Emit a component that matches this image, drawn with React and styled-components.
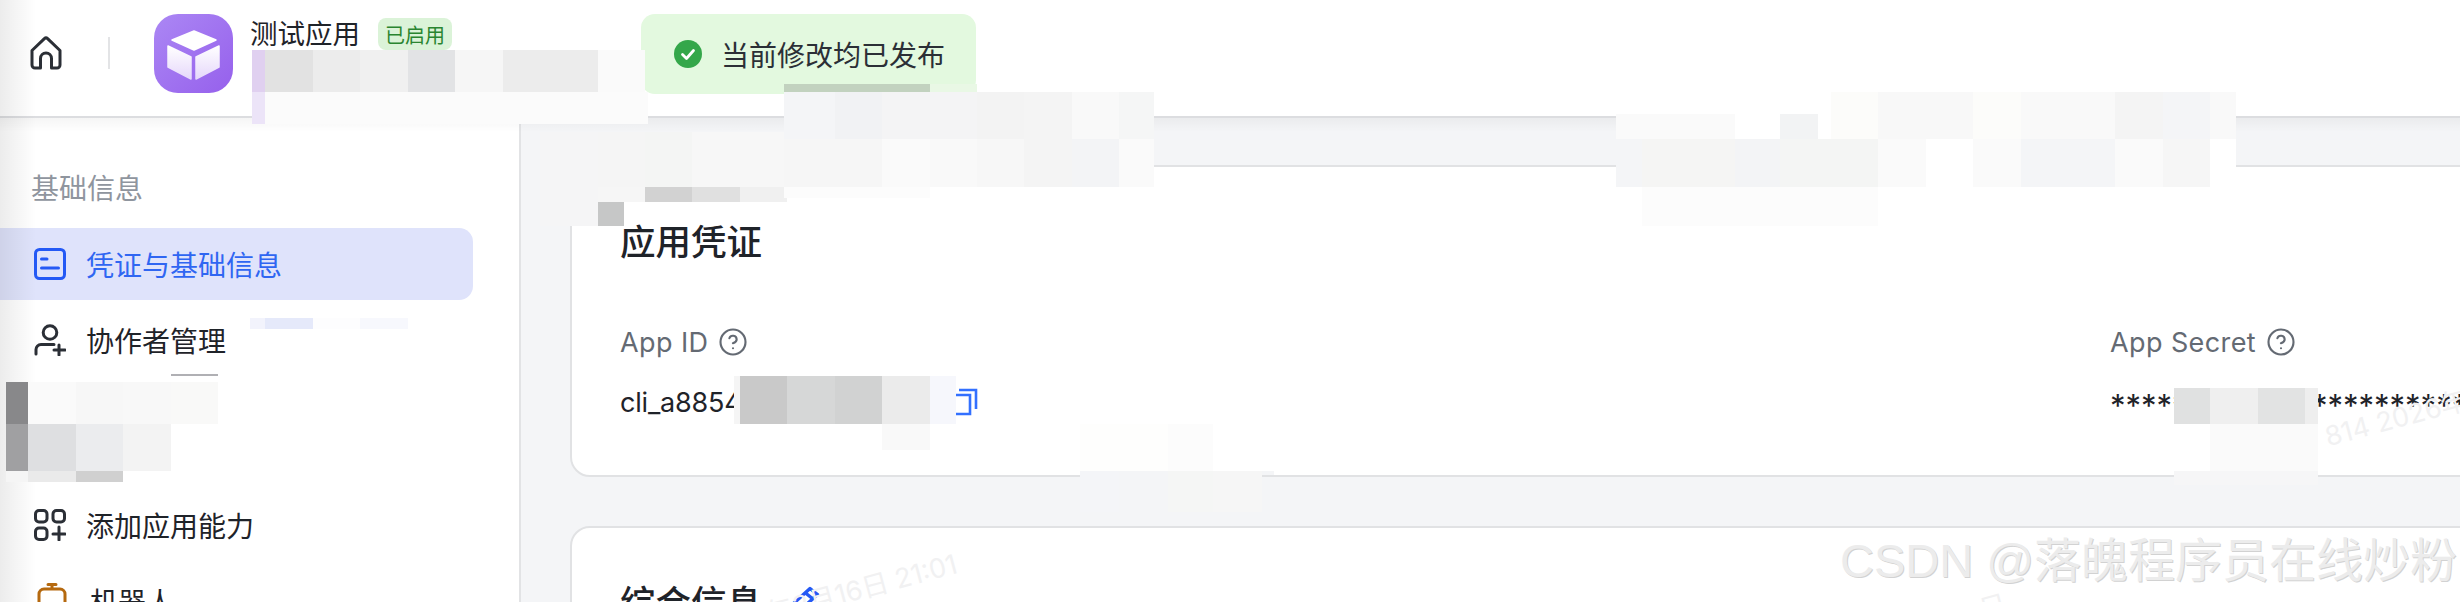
import React from 'react'
import styled, { createGlobalStyle } from 'styled-components'
import { CircleHelp } from 'lucide-react'

const GlobalStyle = createGlobalStyle`
  html, body {
    margin: 0;
    padding: 0;
    background: #fff;
    overflow: hidden;
  }
  * { box-sizing: border-box; }
`

const Page = styled.div`
  position: relative;
  width: 2460px;
  height: 602px;
  overflow: hidden;
  display: flex;
  flex-direction: column;
  background: #fff;
  color: #1f2329;
  font-family: Inter, "Noto Sans CJK SC", sans-serif;
  font-size: 27px;

  &::before {
    content: "";
    position: absolute;
    left: 0;
    top: 0;
    width: 36px;
    height: 100%;
    background: linear-gradient(90deg, rgba(0, 0, 0, 0.075), rgba(0, 0, 0, 0));
    z-index: 3;
    pointer-events: none;
  }
`

const Header = styled.header`
  flex: none;
  height: 118px;
  display: flex;
  align-items: center;
  padding: 0 0 10px 29px;
  border-bottom: 2px solid #dcdde0;
`

const HomeButton = styled.div`
  width: 34px;
  height: 34px;
  color: #2b2f36;
  svg { display: block; }
`

const HeaderDivider = styled.div`
  width: 2px;
  height: 32px;
  margin: 0 44px 0 45px;
  background: #e3e4e6;
`

const AppLogo = styled.div`
  width: 79px;
  height: 79px;
  border-radius: 24px;
  background: linear-gradient(135deg, #ab87f4, #9660ec);
  svg { display: block; }
`

const AppInfo = styled.div`
  align-self: flex-start;
  display: flex;
  align-items: center;
  gap: 18px;
  margin: 18px 0 0 17px;
`

const AppName = styled.div`
  font-size: 27.5px;
  line-height: 32px;
`

const StatusBadge = styled.span`
  display: inline-flex;
  align-items: center;
  height: 32px;
  padding: 0 7px;
  border-radius: 8px;
  background: #dbf3d8;
  color: #2a8530;
  font-size: 20px;
`

const Toast = styled.div`
  position: absolute;
  left: 641px;
  top: 14px;
  width: 335px;
  height: 80px;
  display: flex;
  align-items: center;
  gap: 19px;
  padding-left: 33px;
  border-radius: 14px;
  background: #e3f9df;
  font-size: 28px;
  color: #2b2f36;
  z-index: 2;
  svg { flex: none; }
`

const Body = styled.div`
  position: relative;
  flex: 1;
  min-height: 0;
  display: flex;

  &::before {
    content: "";
    position: absolute;
    left: 0;
    right: 0;
    top: 0;
    height: 14px;
    background: linear-gradient(180deg, rgba(0, 0, 0, 0.04), rgba(0, 0, 0, 0));
    pointer-events: none;
  }
`

const Sidebar = styled.aside`
  flex: none;
  width: 521px;
  padding: 51px 46px 0 0;
  border-right: 2px solid #e2e3e5;
  background: #fff;
`

const SectionLabel = styled.div`
  height: 40px;
  margin-bottom: 19px;
  padding-left: 31px;
  line-height: 40px;
  font-size: 28px;
  color: #8f959e;
`

const NavList = styled.nav`
  display: flex;
  flex-direction: column;
  gap: 4px;
`

const NavItem = styled.div`
  height: 72px;
  display: flex;
  align-items: center;
  gap: 20px;
  padding-left: 34px;
  border-radius: 0 14px 14px 0;
  font-size: 28px;
  flex: none;
  background: ${({ $active }) => ($active ? '#dfe3fb' : 'transparent')};
  color: ${({ $active }) => ($active ? '#2f66f2' : '#1f2329')};
  svg { flex: none; display: block; }
`

const NavGap = styled.div`
  height: 105px;
  flex: none;
`

const Main = styled.main`
  flex: 1;
  min-width: 0;
  overflow: hidden;
  display: flex;
  flex-direction: column;
  gap: 49px;
  padding: 47px 0 0 49px;
  background: #f4f5f7;
`

const Card = styled.section`
  flex: none;
  width: 2100px;
  padding: 51px 48px 53px;
  border: 2px solid #e1e2e4;
  border-radius: 20px 0 0 20px;
  background: #fff;
`

const CardTitle = styled.h2`
  margin: 0;
  display: flex;
  align-items: flex-start;
  gap: 22px;
  font-size: 35.5px;
  line-height: 50px;
  font-weight: 500;
  color: #1f2329;
  svg { margin-top: 7px; flex: none; }
`

const FieldGrid = styled.div`
  display: grid;
  grid-template-columns: 1490px 1fr;
  margin-top: 54px;
`

const Field = styled.div`
  display: flex;
  flex-direction: column;
  gap: 20px;
  min-width: 0;
`

const FieldLabel = styled.div`
  height: 40px;
  display: flex;
  align-items: center;
  gap: 10px;
  font-size: 27px;
  letter-spacing: 0.4px;
  color: #646a73;
`

const FieldValue = styled.div`
  height: 40px;
  display: flex;
  align-items: center;
  font-size: 27px;
  letter-spacing: -0.2px;
  white-space: nowrap;
  color: #1f2329;
`

const ValueText = styled.span`
  width: 330px;
  flex: none;
`

const SecretText = styled.span`
  font-size: 31px;
  letter-spacing: 0;
  line-height: 40px;
  padding-top: 8px;
`

const CopyButton = styled.div`
  width: 28px;
  height: 28px;
  color: #3370ff;
  svg { display: block; }
`

const Patch = styled.div`
  position: absolute;
  left: ${({ $x }) => $x}px;
  top: ${({ $y }) => $y}px;
  width: ${({ $w }) => $w}px;
  height: ${({ $h }) => $h}px;
  background: ${({ $c }) => $c};
  z-index: 4;
`

const Stamp = styled.div`
  position: absolute;
  left: ${({ $x }) => $x}px;
  top: ${({ $y }) => $y}px;
  font-size: 27px;
  white-space: nowrap;
  color: #f1f1f2;
  transform: rotate(-15deg);
  transform-origin: right center;
  z-index: 5;
`

const Watermark = styled.div`
  position: absolute;
  left: 1840px;
  top: 526px;
  font-family: "Liberation Sans", "Noto Sans CJK SC", sans-serif;
  font-size: 47px;
  line-height: 70px;
  white-space: nowrap;
  color: #ececec;
  text-shadow: 1px 1px 0 #d2d2d2;
  z-index: 6;
`

// one row of mosaic cells: xs holds the cell edges, colors one colour per cell
const row = (y, h, xs, colors) =>
  colors.map((c, i) => ({ x: xs[i], y, w: xs[i + 1] - xs[i], h, c }))

const patches = [
  // header, under the app name
  ...row(50, 42, [252, 265, 313, 360, 408, 455, 503, 598, 645],
    ['#e0d0f0', '#e2e2e2', '#ececec', '#f0f0f0', '#e2e3e5', '#f6f6f6', '#ececec', '#fafafa']),
  ...row(92, 32, [252, 265, 648], ['#ece4f8', '#fbfbfb']),
  // next to the toast
  ...row(132, 94, [540, 598], ['#f5f5f6']),
  ...row(132, 55, [598, 645, 692, 784], ['#f5f5f5', '#f4f5f4', '#f7f7f7']),
  ...row(187, 15, [598, 645, 692, 740, 787], ['#f6f6f6', '#d2d2d2', '#e0e0e0', '#f0f0f0']),
  ...row(202, 24, [598, 624], ['#c6c7c7']),
  ...row(84, 8, [784, 930, 977], ['#c2d2bf', '#e9f8e5']),
  ...row(92, 47, [784, 835, 882, 930, 977, 1024, 1072, 1119, 1154],
    ['#f4f5f7', '#f1f2f4', '#f4f4f5', '#f4f4f5', '#f3f3f3', '#f4f4f4', '#f9f9f9', '#f5f6f6']),
  ...row(139, 48, [784, 835, 882, 930, 977, 1024, 1072, 1119, 1154],
    ['#f6f6f6', '#f6f6f6', '#fafafa', '#f9f9f9', '#f7f7f7', '#f4f4f4', '#f3f4f6', '#fafafa']),
  ...row(187, 11, [784, 930], ['#fcfcfc']),
  // right of the header line
  ...row(92, 47, [1831, 1878, 1973, 2021, 2115, 2163, 2210, 2236],
    ['#fcfcfa', '#f8f8f8', '#fcfcfa', '#f9f9f9', '#f4f4f4', '#f4f5f7', '#f9f9f9']),
  ...row(114, 25, [1616, 1735, 1780, 1818, 1831], ['#fafafa', '#ffffff', '#f2f3f4', '#ffffff']),
  ...row(139, 48, [1616, 1642, 1735, 1780, 1878, 1926, 1973, 2021, 2115, 2163, 2210, 2236],
    ['#f4f5f7', '#f5f5f4', '#f3f4f6', '#f4f5f4', '#fafafa', '#ffffff', '#fafafa', '#f4f5f7', '#fafafa', '#f6f6f6', '#ffffff']),
  ...row(187, 39, [1642, 1878], ['#fcfcfc']),
  // sidebar
  ...row(318, 11, [250, 265, 313, 360, 408], ['#f2f3fc', '#e5e9fa', '#fdfdfe', '#f7f8fd']),
  ...row(374, 2, [171, 218], ['#b0b0b4']),
  ...row(382, 42, [6, 28, 76, 123, 171, 218], ['#88888a', '#fafafa', '#f7f7f7', '#f8f8f8', '#f9f9f8']),
  ...row(424, 47, [6, 28, 76, 123, 171], ['#a0a0a2', '#dedfe1', '#ebecee', '#f3f3f3']),
  ...row(471, 11, [6, 28, 76, 123], ['#f5f5f5', '#eaeaea', '#d0d0d0']),
  // App ID value
  ...row(376, 48, [734, 740, 787, 835, 882, 930, 956],
    ['#f5f5f5', '#c9c9c9', '#d6d7d7', '#d1d2d2', '#ebebeb', '#f6f7fc']),
  ...row(424, 26, [882, 930], ['#f9f9f9']),
  // App Secret value
  ...row(388, 36, [2174, 2210, 2258, 2305, 2318], ['#e0e1e1', '#efefef', '#e2e3e3', '#eeeeee']),
  ...row(424, 47, [2210, 2318], ['#fafafa']),
  ...row(471, 14, [2174, 2318], ['#f6f6f7']),
  // over the bottom edge of the first card
  ...row(424, 47, [1080, 1168, 1213], ['#fefefd', '#fcfcfc']),
  ...row(471, 41, [1080, 1119, 1168, 1213, 1262], ['#f4f5f8', '#f4f5f7', '#f5f6f5', '#f6f6f6']),
  ...row(471, 4, [1262, 1274], ['#f4f5f7']),
]

const HomeIcon = () => (
  <svg width="34" height="34" viewBox="0 0 34 34" fill="none" stroke="currentColor" strokeWidth="3" strokeLinejoin="round">
    <path d="M3 14.5 15.4 2.6a2.3 2.3 0 0 1 3.2 0L31 14.5V29a3 3 0 0 1-3 3h-5.5V22.5a5.5 5.5 0 0 0-11 0V32H6a3 3 0 0 1-3-3Z" />
  </svg>
)

const CubeIcon = () => (
  <svg width="79" height="79" viewBox="0 0 79 79">
    <defs>
      <linearGradient id="cubeFace" x1="0" y1="0" x2="0" y2="1">
        <stop offset="0" stopColor="#ffffff" />
        <stop offset="1" stopColor="#e6d8fb" />
      </linearGradient>
    </defs>
    <g fill="url(#cubeFace)" stroke="url(#cubeFace)" strokeWidth="1.5" strokeLinejoin="round">
      <path d="M40 17 62 26 40 36 18 26Z" fill="#fff" stroke="#fff" />
      <path d="M14 32 37 43V65L14 53Z" />
      <path d="M65 32 42 43V65L65 53Z" />
    </g>
  </svg>
)

const CheckIcon = () => (
  <svg width="28" height="28" viewBox="0 0 28 28">
    <circle cx="14" cy="14" r="14" fill="#34a74a" />
    <path d="M8.5 14.5 12.5 18.5 19.5 10.5" fill="none" stroke="#fff" strokeWidth="2.8" strokeLinecap="round" strokeLinejoin="round" />
  </svg>
)

const CredentialIcon = () => (
  <svg width="32" height="32" viewBox="0 0 32 32" fill="none" stroke="#2459f5" strokeWidth="3" strokeLinecap="round">
    <rect x="1.5" y="1.5" width="29" height="29" rx="4" />
    <path d="M7.5 11H13M7.5 20H24.5" />
  </svg>
)

const PersonAddIcon = () => (
  <svg width="32" height="32" viewBox="0 0 32 32" fill="none" stroke="#2b2f36" strokeWidth="3" strokeLinecap="round">
    <circle cx="16" cy="8.5" r="6.8" />
    <path d="M2 30V25.5a5 5 0 0 1 5-5H20" />
    <path d="M25 21V31M20 26H31" />
  </svg>
)

const AddAppIcon = () => (
  <svg width="32" height="32" viewBox="0 0 32 32" fill="none" stroke="#2b2f36" strokeWidth="3" strokeLinecap="round">
    <rect x="1.5" y="1.5" width="11.5" height="11.5" rx="3.5" />
    <rect x="19" y="1.5" width="11.5" height="11.5" rx="3.5" />
    <rect x="1.5" y="19" width="11.5" height="11.5" rx="3.5" />
    <path d="M25 18V31M19 25H31" />
  </svg>
)

const RobotIcon = () => (
  <svg width="36" height="36" viewBox="0 0 36 36" fill="none" stroke="#b5690f" strokeWidth="3" strokeLinecap="round">
    <path d="M18 1V5M14 1.5H22" />
    <rect x="5" y="6" width="26" height="26" rx="5" />
    <path d="M1 22H3M33 22H35" />
  </svg>
)

const CopyIcon = () => (
  <svg width="28" height="28" viewBox="0 0 28 28" fill="none" stroke="currentColor" strokeWidth="2.6">
    <path d="M9 2H26V21" />
    <path d="M3 7H20V26H6a3 3 0 0 1-3-3Z" />
  </svg>
)

const PenIcon = () => (
  <svg width="36" height="34" viewBox="0 0 36 34" fill="none" stroke="#2459f5" strokeWidth="3.4" strokeLinejoin="round">
    <path d="M26 2.5 33.5 8.5 11 29 2 32 4 22.5Z" />
    <path d="M21.5 7 29 13" />
  </svg>
)

const HelpIcon = () => <CircleHelp size={30} strokeWidth={1.7} color="#646a73" />

const App = () => {
  return (
    <Page>
      <GlobalStyle />
      <Header>
        <HomeButton><HomeIcon /></HomeButton>
        <HeaderDivider />
        <AppLogo><CubeIcon /></AppLogo>
        <AppInfo>
          <AppName>测试应用</AppName>
          <StatusBadge>已启用</StatusBadge>
        </AppInfo>
      </Header>
      <Toast>
        <CheckIcon />
        当前修改均已发布
      </Toast>
      <Body>
        <Sidebar>
          <SectionLabel>基础信息</SectionLabel>
          <NavList>
            <NavItem $active><CredentialIcon />凭证与基础信息</NavItem>
            <NavItem><PersonAddIcon />协作者管理</NavItem>
            <NavGap />
            <NavItem><AddAppIcon />添加应用能力</NavItem>
            <NavItem><RobotIcon />机器人</NavItem>
          </NavList>
        </Sidebar>
        <Main>
          <Card>
            <CardTitle>应用凭证</CardTitle>
            <FieldGrid>
              <Field>
                <FieldLabel>App ID <HelpIcon /></FieldLabel>
                <FieldValue>
                  <ValueText>cli_a8854</ValueText>
                  <CopyButton><CopyIcon /></CopyButton>
                </FieldValue>
              </Field>
              <Field>
                <FieldLabel>App Secret <HelpIcon /></FieldLabel>
                <FieldValue><SecretText>********************************</SecretText></FieldValue>
              </Field>
            </FieldGrid>
          </Card>
          <Card>
            <CardTitle>综合信息<PenIcon /></CardTitle>
          </Card>
        </Main>
      </Body>
      {patches.map((p) => (
        <Patch key={`${p.x}-${p.y}`} $x={p.x} $y={p.y} $w={p.w} $h={p.h} $c={p.c} />
      ))}
      <Stamp $x={693} $y={542}>2026年3月16日 21:01</Stamp>
      <Stamp $x={2320} $y={378}>814 2026年</Stamp>
      <Stamp $x={1880} $y={582}>年3月16日</Stamp>
      <Watermark>CSDN @落魄程序员在线炒粉</Watermark>
    </Page>
  )
}

export default App
